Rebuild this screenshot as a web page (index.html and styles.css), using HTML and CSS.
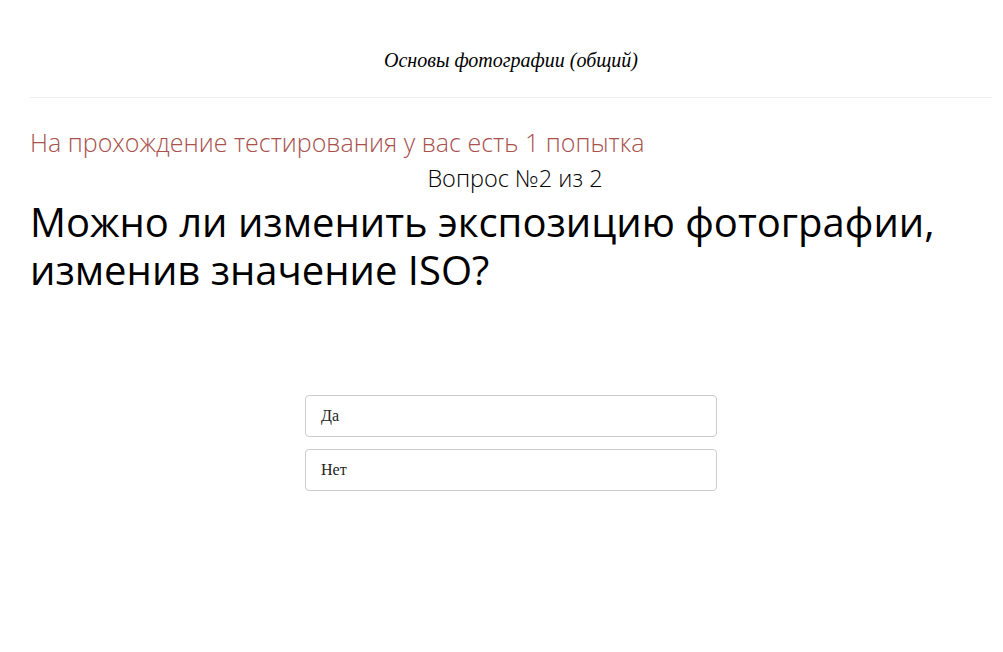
FILE: index.html
```html
<!DOCTYPE html>
<html lang="ru">
<head>
  <meta charset="UTF-8" />
  <meta name="viewport" content="width=device-width, initial-scale=1.0"/>
  <title>Основы фотографии (общий)</title>
  <link rel="stylesheet" href="styles.css">
</head>
<body>
  <div class="page">
    <div class="course-title">Основы фотографии (общий)</div>
    <div class="attempts">На прохождение тестирования у вас есть 1 попытка</div>
    <div class="counter">Вопрос №2 из 2</div>
    <h1 class="question">Можно ли изменить экспозицию фотографии, изменив значение ISO?</h1>
    <div class="answers">
      <button class="answer">Да</button>
      <button class="answer">Нет</button>
    </div>
  </div>
</body>
</html>
```

FILE: styles.css
```css
body {
  margin: 0;
  background: #fff;
  color: #000;
  font-family: 'Open Sans', sans-serif;
}
.page {
  margin: 0 11px 0 30px;
}
.course-title {
  font-family: 'Liberation Serif', serif;
  font-style: italic;
  font-size: 20px;
  line-height: 23px;
  text-align: center;
  padding: 49px 0 25px;
  border-bottom: 1px solid #eee;
}
.attempts {
  margin-top: 27px;
  font-size: 25px;
  font-weight: 300;
  color: #a8514d;
  line-height: 34px;
}
.counter {
  font-size: 23.5px;
  font-weight: 300;
  text-align: center;
  line-height: 34px;
  margin-top: 2px;
  padding-left: 8px;
}
.question {
  font-size: 40px;
  font-weight: 400;
  line-height: 48px;
  margin: 3px 0 0;
}
.answers {
  width: 412px;
  margin: 101px auto 0;
  display: flex;
  flex-direction: column;
  gap: 12px;
}
.answer {
  height: 42px;
  background: #fff;
  border: 1px solid #ccc;
  border-radius: 4px;
  padding: 0 15px;
  text-align: left;
  font-family: 'Liberation Serif', serif;
  font-size: 16px;
  color: #222;
  cursor: pointer;
}
```
